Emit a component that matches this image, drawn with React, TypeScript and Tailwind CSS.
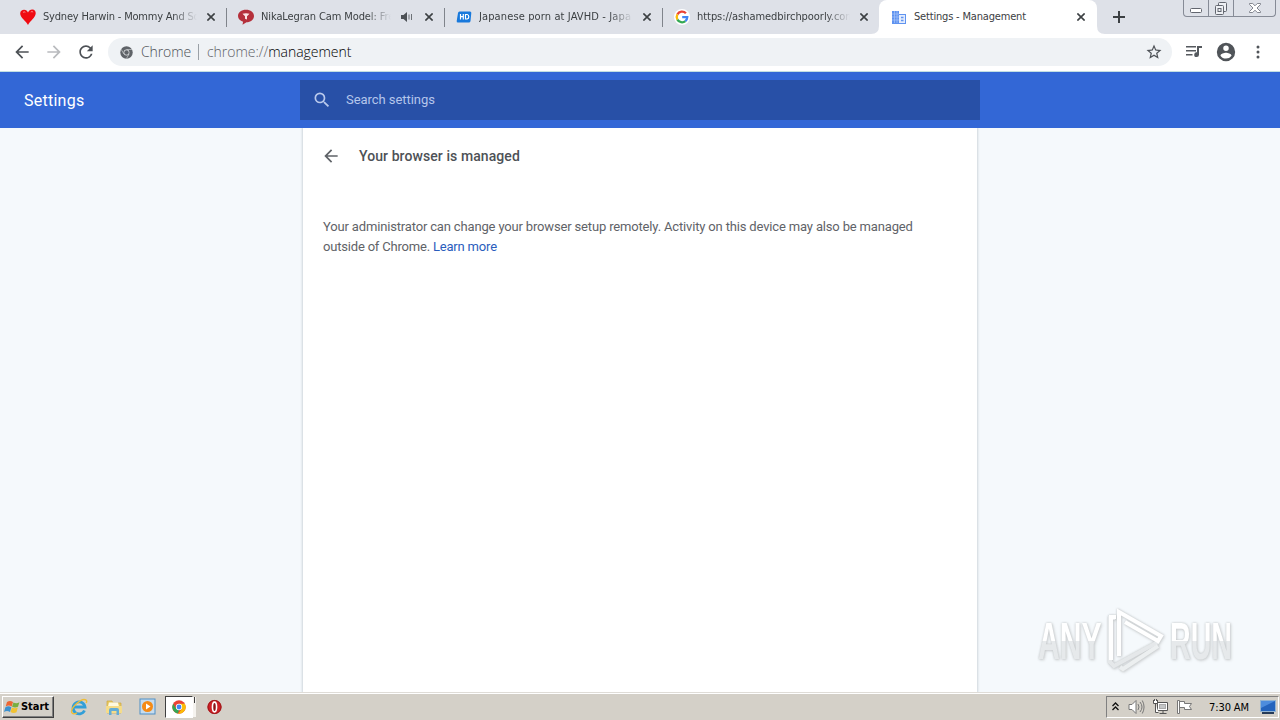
import type { ReactNode } from "react";
import clsx from "clsx";

function HeartIcon() {
  return (
    <svg width="16" height="16" viewBox="0 0 16 16">
      <path d="M8 16C6 12 .2 9 .2 4.600.2 2 2 .8 4.100.8 6 .8 7.400 2 8 3.600 8.900 1.600 10.400.5 12.400.6c2.200.1 3.500 1.700 3.300 4C15.400 9 10 12 8 16Z" fill="#f00b12" />
      <path d="M3 3.600c.7-.8 1.700-.8 2.300-.3M10.800 3c.8-.6 1.800-.4 2.300.2" stroke="#ff9b9b" fill="none" />
    </svg>
  );
}

function ChatIcon() {
  return (
    <svg width="16" height="16" viewBox="0 0 16 16">
      <path d="M8 .8c4.600 0 8 2.600 8 6.200s-3.400 6.300-7.500 6.300L4.500 15.800l.6-3C2 11.800 0 9.800 0 7 0 3.400 3.400.8 8 .8Z" fill="#b5303b" />
      <path d="M4.500 4.700c2-.7 5-.7 7 0L9 7.200v3.400L7 9.800V7.200Z" fill="#fbe3e3" />
    </svg>
  );
}

function HdIcon() {
  return (
    <svg width="16" height="16" viewBox="0 0 16 16">
      <path d="M3.500 2.500H14q1.500 0 1.300 1.500l-.8 8q-.2 1.500-1.700 1.500H2Q.4 13.500.7 12L2 4q.2-1.500 1.500-1.500Z" fill="#1879dc" />
      <path d="M4.500 5v5.500M7.300 5v5.500M4.500 7.700h2.800M9.500 5.500v4.500h1.700q1.600-.3 1.600-2.200t-1.600-2.300Z" stroke="#fff" strokeWidth="1.200" fill="none" />
    </svg>
  );
}

function GoogleIcon() {
  return (
    <svg width="16" height="16" viewBox="0 0 16 16">
      <circle cx="8" cy="8" r="8" fill="#fff" />
      <g fill="none" strokeWidth="2.300">
        <path d="M11.900 4.300A5.300 5.300 0 0 0 3.400 5.400" stroke="#ea4335" />
        <path d="M3.400 5.400a5.300 5.300 0 0 0 0 5.200" stroke="#fbbc05" />
        <path d="M3.400 10.600a5.300 5.300 0 0 0 8 1.500" stroke="#34a853" />
        <path d="M11.400 12.100A5.300 5.300 0 0 0 13.300 8.100H8.200" stroke="#4285f4" />
      </g>
    </svg>
  );
}

function BuildingIcon() {
  return (
    <svg width="16" height="16" viewBox="0 0 16 16">
      <path d="M1 2h7v3h7v10H1Z" fill="#5f93f0" />
      <path d="M8 6h6v8H8Z" fill="#e3ecfd" />
      <path d="M1 5h7M1 8h7M1 11h7M3.500 2v12M6 2v12" stroke="#a9c5f8" strokeWidth=".7" />
      <path d="M10 8.500h2.500M10 11.500h2.500" stroke="#5f93f0" strokeWidth="1.400" />
    </svg>
  );
}

function ChromeIcon({ mono = false, size = 14 }: { mono?: boolean; size?: number }) {
  return (
    <svg width={size} height={size} viewBox="0 0 24 24">
      <circle cx="12" cy="12" r="11.500" fill={mono ? "#5f6368" : "#ea4335"} />
      {!mono && (
        <>
          <path d="M2.040 6.250 7.200 15l4.800 2.500L10 23.330A11.500 11.500 0 0 1 2.040 6.250Z" fill="#34a853" />
          <path d="M12 6.500h10.100A11.500 11.500 0 0 1 10.500 23.400L17 15Z" fill="#fbbc05" />
        </>
      )}
      {mono && <path d="M12 6.500h10M7.200 14.800 2.200 6.200M16.800 14.800l-5 8.500" stroke="#d5d8da" strokeWidth="1.200" />}
      <circle cx="12" cy="12" r="5.400" fill={mono ? "#dfe1e3" : "#fff"} />
      <circle cx="12" cy="12" r="4.100" fill={mono ? "#5f6368" : "#4285f4"} />
    </svg>
  );
}

function CloseIcon() {
  return (
    <svg width="8" height="8" viewBox="0 0 8 8" className="shrink-0">
      <path d="m.4.4 7.200 7.200m0-7.200L.4 7.600" stroke="#3c4043" strokeWidth="1.600" />
    </svg>
  );
}

function BackArrow({ size = 24, color = "#5f6368" }: { size?: number; color?: string }) {
  return (
    <svg width={size} height={size} viewBox="0 0 24 24" fill={color}>
      <path d="M20 11H7.830l5.590-5.590L12 4l-8 8 8 8 1.410-1.410L7.830 13H20v-2z" />
    </svg>
  );
}

interface TabProps {
  icon: ReactNode;
  title: string;
  spacing: string;
  width?: string;
  audio?: boolean;
  active?: boolean;
  separator?: boolean;
}

function Tab({ icon, title, spacing, width = "w-[218px]", audio, active, separator }: TabProps) {
  return (
    <div
      className={clsx(
        "relative flex h-[34px] shrink-0 items-center pr-3",
        width,
        active ? "-ml-px rounded-t-lg bg-white pl-3" : "pl-[11px]"
      )}
    >
      {active && (
        <svg className="absolute -left-2 bottom-0" width="234" height="8" viewBox="0 0 234 8" fill="#fff">
          <path d="M0 8q8 0 8-8v8ZM234 8q-8 0-8-8v8Z" />
        </svg>
      )}
      {icon}
      <span
        className={clsx(
          "ml-[7px] min-w-0 flex-1 pt-px whitespace-nowrap",
          spacing,
          !active && "[mask-image:linear-gradient(to_right,black_calc(100%-26px),transparent_calc(100%-2px))]"
        )}
      >
        {title}
      </span>
      {audio && (
        <svg className="ml-2 shrink-0" width="12" height="10" viewBox="0 0 12 10">
          <path d="M0 3h2.500L6 0v10L2.500 7H0Z" fill="#4d5156" />
          <path d="M8 2.500v5M10.500 2v6" stroke="#6d7176" />
        </svg>
      )}
      <span className={clsx("flex", audio ? "ml-3" : "ml-2")}>
        <CloseIcon />
      </span>
      {separator && <span className="absolute right-0 top-2 h-[19px] w-px bg-[#80848b]" />}
    </div>
  );
}

function WindowButtons() {
  return (
    <div className="mr-1 ml-auto flex h-[17px] w-[93px] rounded-b-[4px] border border-t-0 border-[#868b96] bg-[#dee1e8]">
      <div className="flex w-[25px] justify-center border-r border-[#868b96]">
        <svg width="14" height="16" viewBox="0 0 14 16">
          <rect x="1.500" y="8.500" width="11" height="4" rx="1" fill="#fff" stroke="#62666f" />
        </svg>
      </div>
      <div className="flex w-[25px] justify-center border-r border-[#868b96]">
        <svg width="14" height="16" viewBox="0 0 14 16" fill="#eef0f4" stroke="#62666f">
          <rect x="4.500" y="2.500" width="8" height="9" rx="1" />
          <rect x="1.500" y="5.500" width="8" height="9" rx="1" />
          <rect x="4" y="8.500" width="3" height="3" />
        </svg>
      </div>
      <div className="flex flex-1 justify-center">
        <svg width="14" height="16" viewBox="0 0 14 16">
          <path d="M1.500 3.500h3.200L7 5.800l2.300-2.300h3.200v1L9 8l3.500 3.500v1H9.300L7 10.200l-2.300 2.300H1.500v-1L5 8 1.500 4.500Z" fill="#fff" stroke="#777b84" strokeWidth=".9" />
        </svg>
      </div>
    </div>
  );
}

function TabStrip() {
  return (
    <div className="flex h-[34px] bg-[#dee1e8] pl-[9px] font-['DejaVu_Sans_Condensed','DejaVu_Sans',sans-serif] text-[11px] font-stretch-condensed text-[#3c4043]">
      <Tab icon={<HeartIcon />} title="Sydney Harwin - Mommy And So" spacing="tracking-[-0.2px]" separator />
      <Tab icon={<ChatIcon />} title="NikaLegran Cam Model: Fre" spacing="tracking-[-0.1px]" audio separator />
      <Tab icon={<HdIcon />} title="Japanese porn at JAVHD - Japa" spacing="tracking-[0.12px]" separator />
      <Tab icon={<GoogleIcon />} title="https://ashamedbirchpoorly.com" spacing="tracking-[-0.05px]" width="w-[217px]" />
      <Tab icon={<BuildingIcon />} title="Settings - Management" spacing="tracking-[-0.18px]" active />
      <svg className="ml-4 mt-[11px]" width="12" height="12" viewBox="0 0 12 12">
        <path d="M6 0v12M0 6h12" stroke="#3c4043" strokeWidth="2" />
      </svg>
      <WindowButtons />
    </div>
  );
}

function Toolbar() {
  return (
    <div className="flex h-[38px] items-center border-b border-[#c3dfe2] bg-white pb-px pl-3">
      <BackArrow size={20} color="#4d5156" />
      <svg className="ml-3" width="20" height="20" viewBox="0 0 24 24" fill="#b9bbbe">
        <path d="m12 4-1.410 1.410L16.170 11H4v2h12.170l-5.580 5.590L12 20l8-8z" />
      </svg>
      <svg className="ml-3" width="20" height="20" viewBox="0 0 24 24" fill="#4d5156">
        <path d="M17.650 6.350A7.958 7.958 0 0 0 12 4c-4.420 0-7.990 3.580-7.990 8s3.570 8 7.990 8c3.730 0 6.840-2.550 7.730-6h-2.080A5.990 5.990 0 0 1 12 18c-3.310 0-6-2.690-6-6s2.690-6 6-6c1.660 0 3.140.69 4.220 1.780L13 11h7V4l-2.350 2.350z" />
      </svg>
      <div className="ml-3 flex h-7 w-[1064px] items-center rounded-full bg-[#eff2f5] pl-3 font-['Open_Sans','Noto_Sans',sans-serif] text-sm font-light">
        <ChromeIcon mono size={13} />
        <span className="ml-2 w-[57px] tracking-[-0.1px] text-[#4d5156]">Chrome</span>
        <span className="h-4 w-px bg-[#9aa0a6]" />
        <span className="ml-2 tracking-[-0.03px] text-black">
          <span className="text-[#5f6368]">chrome://</span>management
        </span>
        <svg className="mr-[9px] ml-auto" width="18" height="18" viewBox="0 0 24 24" fill="#4d5156">
          <path d="m22 9.240-7.190-.62L12 2 9.190 8.630 2 9.240l5.460 4.730L5.820 21 12 17.270 18.180 21l-1.630-7.030L22 9.240zM12 15.400l-3.760 2.270 1-4.280-3.320-2.880 4.380-.38L12 6.100l1.710 4.040 4.380.38-3.320 2.880 1 4.280L12 15.400z" />
        </svg>
      </div>
      <svg className="ml-3" width="20" height="20" viewBox="0 0 20 20" fill="#55595e">
        <path d="M2 4h10v1.500H2zM2 8h10v1.500H2zM2 12h6.500v1.500H2zM13 4h5v2h-3v6.700a2.400 2.400 0 1 1-2-2.400Z" />
      </svg>
      <svg className="ml-[11px]" width="22" height="22" viewBox="0 0 24 24" fill="#505459">
        <path d="M12 2a10 10 0 1 0 0 20 10 10 0 0 0 0-20zm0 3a3 3 0 1 1 0 6 3 3 0 0 1 0-6zm0 14.200a7.200 7.200 0 0 1-6-3.220c.03-1.990 4-3.080 6-3.080s5.970 1.090 6 3.080a7.200 7.200 0 0 1-6 3.220z" />
      </svg>
      <svg className="ml-[19px]" width="4" height="14" viewBox="0 0 4 14" fill="#505459">
        <circle cx="2" cy="2" r="1.500" />
        <circle cx="2" cy="7" r="1.500" />
        <circle cx="2" cy="12" r="1.500" />
      </svg>
    </div>
  );
}

function SettingsPage() {
  return (
    <main className="flex min-h-0 flex-1 flex-col bg-[#f5f9fc] font-[Roboto,sans-serif]">
      <header className="relative z-10 flex h-14 shrink-0 items-center bg-[#3367d6]">
        <h1 className="w-[300px] pl-6 pt-px text-base tracking-[0.25px] text-white">Settings</h1>
        <div className="flex h-10 w-[680px] items-center bg-[#2850a7] pl-3">
          <svg width="20" height="20" viewBox="0 0 24 24" fill="#b9c9ec">
            <path d="M15.500 14h-.79l-.28-.27A6.470 6.470 0 0 0 16 9.500 6.500 6.500 0 1 0 9.500 16c1.610 0 3.090-.59 4.230-1.570l.27.280v.79l5 4.990L20.490 19l-4.990-5zm-6 0C7.010 14 5 11.990 5 9.500S7.010 5 9.500 5 14 7.010 14 9.500 11.990 14 9.500 14z" />
          </svg>
          <span className="ml-3.5 text-[13px] tracking-[-0.05px] text-[#b5c6eb]">Search settings</span>
        </div>
      </header>
      <section className="mx-auto w-[674px] flex-1 bg-white shadow-[0_0_2px_1px_#cfd6dc]">
        <div className="flex h-14 items-center pl-[18px]">
          <BackArrow size={20} />
          <h2 className="ml-[18px] text-sm font-medium tracking-[0.08px] text-[#4d5156]">Your browser is managed</h2>
        </div>
        <p className="pl-5 pt-[33px] text-[13px] leading-5 tracking-[-0.16px] whitespace-nowrap text-[#5f6368]">
          Your administrator can change your browser setup remotely. Activity on this device may also be managed
          <br />
          <span className="tracking-[-0.19px]">
            outside of Chrome. <a className="text-[#2a5dbd]">Learn more</a>
          </span>
        </p>
      </section>
    </main>
  );
}

function Watermark() {
  return (
    <div className="absolute right-[46px] bottom-[46px] flex h-[66px] w-[196px] items-center justify-between font-['Liberation_Sans',sans-serif] text-[52px] leading-[60px] font-bold [filter:drop-shadow(0_0_1px_#c3c7c9)_drop-shadow(1px_1px_1px_#d6d9db)]">
      <span className="w-[64px]">
        <span className="inline-block origin-left scale-x-[0.58] bg-linear-to-b from-white from-50% to-[#e6e9eb] to-50% bg-clip-text text-transparent">
          ANY
        </span>
      </span>
      <svg className="absolute left-[70px] top-0" width="60" height="66" viewBox="0 0 60 66" fill="none" strokeWidth="4">
        <path d="M7 10H2v44l4 4 44-24" stroke="#e5e8ea" />
        <path d="M50 38 15 61l-3-2" stroke="#eceff0" />
        <path d="M8 9H3v43M11 48V4L53 28l-3 5L17 14" stroke="#fff" />
      </svg>
      <span className="w-[64px]">
        <span className="inline-block origin-left scale-x-[0.55] bg-linear-to-b from-white from-50% to-[#e6e9eb] to-50% bg-clip-text text-transparent">
          RUN
        </span>
      </span>
    </div>
  );
}

function StartButton() {
  return (
    <button className="flex h-[22px] w-[52px] items-center border border-t-white border-r-[#404040] border-b-[#404040] border-l-white bg-[#d4d0c8] pl-px font-['DejaVu_Sans_Condensed','DejaVu_Sans',sans-serif] text-[11px] font-bold font-stretch-condensed tracking-[-0.05px] text-black shadow-[inset_-1px_-1px_#808080]">
      <svg className="shrink-0" width="17" height="16" viewBox="0 0 17 16">
        <path d="M3 3q3-2 6 0L7.700 7.500q-3-2-6 0Z" fill="#ed6632" />
        <path d="M9.400 3.400q3 1.600 6-.2L14 7.800q-3 1.500-5.900-.1Z" fill="#78ae40" />
        <path d="M1.400 8.200q3-2 6 0L6 13q-3-2-6 0Z" fill="#3c91cf" />
        <path d="M7.900 8.400q3 1.600 5.900 0L12.500 13.300q-3 1.500-6-.2Z" fill="#f1c232" />
      </svg>
      <span className="pt-0.5">Start</span>
    </button>
  );
}

function ExplorerIcon() {
  return (
    <svg width="18" height="18" viewBox="0 0 18 18" fill="none">
      <path d="M14.500 12.500A6 6 0 1 1 15 9H4.500" stroke="#329fd8" strokeWidth="2.800" />
      <path d="M2 15C-.5 11 11-.5 16 2c1 .6.700 2 .2 3M2 15c1 1 3 .8 5-.2" stroke="#edbd39" strokeWidth="1.400" />
    </svg>
  );
}

function FolderIcon() {
  return (
    <svg width="18" height="18" viewBox="0 0 18 18">
      <path d="M2 3h5l1 2h8v10H2Z" fill="#e7c960" stroke="#cda744" strokeWidth=".7" />
      <path d="M4 4.500h9l1 4H3Z" fill="#fff9df" />
      <path d="M1 8h16v7H1Z" fill="#f5dc89" />
      <path d="M4 17v-5q0-2 2-2h6q2 0 2 2v5h-2.500v-4h-5v4Z" fill="#64acd5" />
    </svg>
  );
}

function MediaIcon() {
  return (
    <svg width="17" height="17" viewBox="0 0 17 17">
      <rect x="1" y="1" width="15" height="15" fill="#c6dcee" stroke="#4e8fc5" />
      <circle cx="8.500" cy="8.500" r="5.500" fill="#f58b16" />
      <path d="m7 5.500 4.500 3L7 11.500Z" fill="#fff" />
    </svg>
  );
}

function Taskbar() {
  return (
    <footer className="flex h-7 shrink-0 items-center border-t border-[#dfdcd7] bg-[#d4d0c8] pl-0.5 shadow-[inset_0_1px_#fff]">
      <StartButton />
      <div className="ml-4 flex w-[93px] items-center justify-between pr-[7px]">
        <ExplorerIcon />
        <FolderIcon />
        <MediaIcon />
      </div>
      <div className="ml-0.5 flex h-[22px] w-7 items-center justify-center border border-t-[#404040] border-r-white border-b-white border-l-[#404040] bg-white">
        <ChromeIcon size={14} />
      </div>
      <div className="flex h-5 w-[3px] items-start bg-[#f5f3ef]">
        <span className="ml-px h-1.5 w-px bg-[#404040]" />
      </div>
      <svg className="ml-[11px]" width="15" height="16" viewBox="0 0 16 16">
        <circle cx="8" cy="8" r="7.500" fill="#cf1f25" />
        <circle cx="8" cy="8" r="7" fill="none" stroke="#951619" />
        <ellipse cx="8" cy="8" rx="2.200" ry="5.200" fill="#8d1316" stroke="#fff" strokeWidth="1.700" />
      </svg>
      <div className="ml-auto mr-px flex h-[22px] w-[173px] items-center border border-t-[#808080] border-r-white border-b-white border-l-[#808080] pl-[5px]">
        <svg width="7" height="9" viewBox="0 0 7 9" fill="none" stroke="#111" strokeWidth="1.300">
          <path d="m.5 4 3-3 3 3M.5 8l3-3 3 3" />
        </svg>
        <svg className="ml-[9px]" width="17" height="16" viewBox="0 0 17 16" stroke="#777" fill="none">
          <path d="M1 5.500h3l4-4v13l-4-4H1Z" fill="#fff" />
          <path d="M10 5q2 3 0 6M12 3q4 5 0 10M14.300 1.500q3.500 6.500 0 13" />
        </svg>
        <svg className="ml-[7px]" width="17" height="16" viewBox="0 0 17 16" stroke="#555" fill="none">
          <path d="M5.500 3.500h10v8h-10ZM7.500 14.500h7M11 11.500v3" fill="#fff" />
          <rect x="7.500" y="5.500" width="6" height="4" fill="#c4c6c7" stroke="#aaa" />
          <path d="M1.500 1v3.500h4V1M3.500 4.500v9h3M2.500 0v2M4.500 0v2" fill="#fff" />
        </svg>
        <svg className="ml-[7px]" width="17" height="16" viewBox="0 0 17 16" stroke="#777" fill="#fff">
          <path d="M1.500 1.500h2v13h-2ZM3.500 2.500h5v2h7l-2 3 2 3h-7v-2h-5Z" />
        </svg>
        <span className="ml-4 pt-[3px] font-['DejaVu_Sans_Condensed','DejaVu_Sans',sans-serif] text-[11px] font-stretch-condensed tracking-[-0.1px] whitespace-nowrap text-black">
          7:30 AM
        </span>
        <svg className="mr-0.5 ml-auto" width="16" height="14" viewBox="0 0 16 14">
          <rect x=".5" y=".5" width="15" height="11" fill="#2464bd" stroke="#93b4d2" />
          <path d="M1 1h14L1 8Z" fill="#4d8ddd" />
          <path d="M2 12h12v2H2Z" fill="#263b58" />
        </svg>
      </div>
    </footer>
  );
}

export default function App() {
  return (
    <div className="relative flex h-[720px] w-[1280px] flex-col overflow-hidden bg-white">
      <TabStrip />
      <Toolbar />
      <SettingsPage />
      <Watermark />
      <Taskbar />
    </div>
  );
}
